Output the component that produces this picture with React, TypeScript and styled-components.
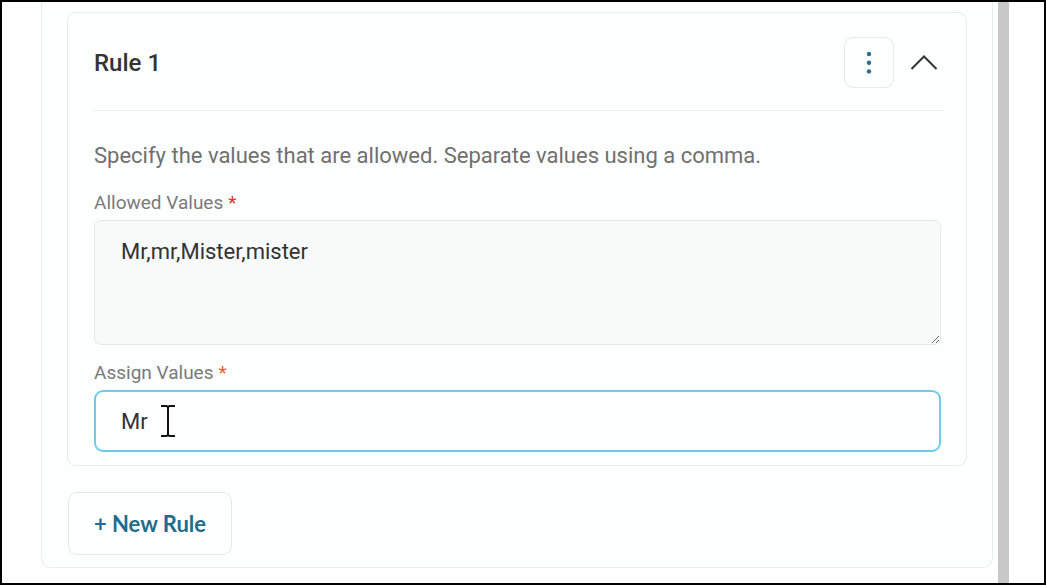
import React from "react";
import styled, { createGlobalStyle } from "styled-components";

const GlobalStyle = createGlobalStyle`
  html, body {
    margin: 0;
    padding: 0;
    background: #ffffff;
  }
  body {
    font-family: Roboto, "Liberation Sans", sans-serif;
  }
`;

const Screen = styled.div`
  width: 1046px;
  height: 585px;
  box-sizing: border-box;
  border: 2px solid #000;
  display: flex;
  background: #fff;
  overflow: hidden;
`;

const Content = styled.div`
  flex: 1;
  display: flex;
  padding-left: 39px;
`;

const Panel = styled.section`
  width: 952px;
  height: 566px;
  box-sizing: border-box;
  border: 1px solid #e7eeee;
  border-top: none;
  border-radius: 0 0 10px 10px;
  background: #fdfefe;
  padding: 10px 25px 0 25px;
  display: flex;
  flex-direction: column;
  gap: 26px;
`;

const ScrollTrack = styled.div`
  width: 11px;
  margin-left: 5px;
  margin-right: 35px;
  background: #c8c8c8;
`;

const Card = styled.div`
  width: 900px;
  box-sizing: border-box;
  border: 1px solid #e6eded;
  border-radius: 9px;
  background: #fdfefe;
  padding-bottom: 13px;
`;

const Header = styled.div`
  display: flex;
  align-items: center;
  margin: 0 22px 0 26px;
  padding: 24px 0 22px;
  border-bottom: 1px solid #ecf0f0;
`;

const Title = styled.h2`
  flex: 1;
  margin: 0;
  font-size: 24px;
  font-weight: 500;
  color: #333;
`;

const IconButton = styled.button`
  width: 50px;
  height: 51px;
  box-sizing: border-box;
  border: 1px solid #e4ecec;
  border-radius: 9px;
  background: #fdfefe;
  display: flex;
  align-items: center;
  justify-content: center;
  padding: 0;
`;

const Chevron = styled.button`
  width: 40px;
  height: 34px;
  margin-left: 10px;
  border: none;
  background: none;
  padding: 0;
  display: flex;
  align-items: center;
  justify-content: center;
`;

const Body = styled.div`
  padding: 0 25px 0 26px;
`;

const Hint = styled.p`
  margin: 32px 0 0;
  font-size: 22px;
  line-height: 26px;
  color: #707070;
`;

const Label = styled.label<{ $top: number }>`
  display: block;
  margin: ${(p) => p.$top}px 0 6px;
  font-size: 19px;
  line-height: 22px;
  color: #7a7a7a;
`;

const Required = styled.span<{ $tone: string }>`
  color: ${(p) => p.$tone};
  margin-left: 5px;
`;

const Area = styled.textarea`
  display: block;
  width: 100%;
  height: 125px;
  box-sizing: border-box;
  border: 1px solid #e2e8e8;
  border-radius: 7px;
  background: #f8f9f9;
  padding: 18px 26px;
  font-family: Roboto, "Liberation Sans", sans-serif;
  font-size: 22px;
  line-height: 26px;
  color: #333;
  resize: vertical;
  outline: none;
`;

const InputWrap = styled.div`
  position: relative;
`;

const Field = styled.input`
  display: block;
  width: 100%;
  height: 62px;
  box-sizing: border-box;
  border: 2px solid #6fcbea;
  border-radius: 9px;
  background: #fdfefe;
  padding: 0 25px;
  font-family: Roboto, "Liberation Sans", sans-serif;
  font-size: 22px;
  color: #333;
  outline: none;
`;

const TextCursor = styled.svg`
  position: absolute;
  left: 64px;
  top: 14px;
  pointer-events: none;
`;

const AddButton = styled.button`
  align-self: flex-start;
  width: 164px;
  height: 63px;
  margin-left: 1px;
  box-sizing: border-box;
  border: 1px solid #e3eaea;
  border-radius: 9px;
  background: #fdfefe;
  font-family: Lato, "Liberation Sans", sans-serif;
  font-weight: 700;
  font-size: 22px;
  color: #1f6d8c;
  padding: 0;
  text-align: center;
`;

const Dots = () => (
  <svg width="6" height="24" viewBox="0 0 6 24">
    <circle cx="3" cy="3" r="2.2" fill="#2a6f8f" />
    <circle cx="3" cy="11.7" r="2.2" fill="#2a6f8f" />
    <circle cx="3" cy="20.4" r="2.2" fill="#2a6f8f" />
  </svg>
);

const beam = "M3 2 H8 Q10 2 10 4 Q10 2 12 2 H17 M10 4 V30 Q10 32 8 32 H3 M10 30 Q10 32 12 32 H17";

export default function App() {
  return (
    <Screen>
      <GlobalStyle />
      <Content>
        <Panel>
          <Card>
            <Header>
              <Title>Rule 1</Title>
              <IconButton aria-label="More">
                <Dots />
              </IconButton>
              <Chevron aria-label="Collapse">
                <svg width="28" height="19" viewBox="0 0 28 19">
                  <path d="M1.5 16 L14 3.5 L26.5 16" fill="none" stroke="#333" strokeWidth="2" />
                </svg>
              </Chevron>
            </Header>
            <Body>
              <Hint>Specify the values that are allowed. Separate values using a comma.</Hint>
              <Label $top={23}>
                Allowed Values<Required $tone="#e0302a">*</Required>
              </Label>
              <Area defaultValue="Mr,mr,Mister,mister" />
              <Label $top={17}>
                Assign Values<Required $tone="#e8622a">*</Required>
              </Label>
              <InputWrap>
                <Field defaultValue="Mr" />
                <TextCursor width="20" height="34" viewBox="0 0 20 34">
                  <path d={beam} fill="none" stroke="#fff" strokeWidth="4" />
                  <path d={beam} fill="none" stroke="#111" strokeWidth="2" />
                </TextCursor>
              </InputWrap>
            </Body>
          </Card>
          <AddButton>+ New Rule</AddButton>
        </Panel>
        <ScrollTrack />
      </Content>
    </Screen>
  );
}
